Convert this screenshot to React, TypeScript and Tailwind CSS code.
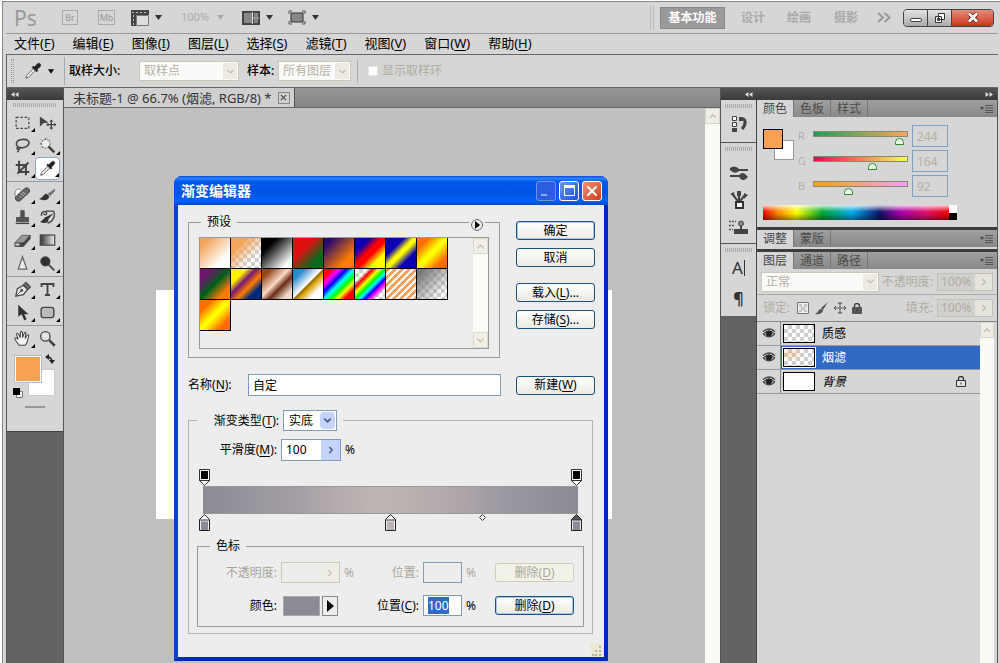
import { useEffect, useRef } from 'react'
import type { ReactNode } from 'react'
import { clsx } from 'clsx'
import { ChevronDown, ChevronRight, ChevronUp, X } from 'lucide-react'

const MENUS = [
    ['文件', 'F'],
    ['编辑', 'E'],
    ['图像', 'I'],
    ['图层', 'L'],
    ['选择', 'S'],
    ['滤镜', 'T'],
    ['视图', 'V'],
    ['窗口', 'W'],
    ['帮助', 'H']
]

const CHECKER = 'bg-[repeating-conic-gradient(#cfcfcf_0_25%,#fff_0_50%)] bg-[length:8px_8px]'

const PRESETS = [
    { name: '前景到背景', fill: 'bg-[linear-gradient(135deg,#f4a45c_15%,#fff_75%)]' },
    { name: '前景到透明', fill: 'bg-[linear-gradient(135deg,#f4a45c_25%,transparent_70%)]' },
    { name: '黑白', fill: 'bg-[linear-gradient(135deg,#000_25%,#fff_85%)]' },
    { name: '红绿', fill: 'bg-[linear-gradient(135deg,#e01010_35%,#0a6a1c_75%)]' },
    { name: '紫橙', fill: 'bg-[linear-gradient(135deg,#2b0a6e_15%,#ff7c00_75%)]' },
    { name: '蓝红黄', fill: 'bg-[linear-gradient(135deg,#0a00b2_25%,#f00_45%,#f00_55%,#fffc00_75%)]' },
    { name: '蓝黄蓝', fill: 'bg-[linear-gradient(135deg,#0a00b2_30%,#fffc00_47%,#fffc00_53%,#0a00b2_72%)]' },
    { name: '橙黄橙', fill: 'bg-[linear-gradient(135deg,#ff6e02_20%,#ffff00_47%,#ffff00_53%,#ff6d00_80%)]' },
    { name: '紫绿橙', fill: 'bg-[linear-gradient(135deg,#6f156c_20%,#00601b_50%,#fd7c00_80%)]' },
    { name: '黄紫橙蓝', fill: 'bg-[linear-gradient(135deg,#fff000_25%,#77196f_42%,#fd7c00_60%,#00287b_78%)]' },
    { name: '铜色', fill: 'bg-[linear-gradient(135deg,#97461a_15%,#fbd8c5_45%,#6c2e16_62%,#efdbcd_85%)]' },
    { name: '铬黄', fill: 'bg-[linear-gradient(135deg,#2989cc_18%,#fff_48%,#906a00_52%,#d99f00_58%,#fff_78%)]' },
    { name: '色谱', fill: 'bg-[linear-gradient(135deg,#f00_12%,#f0f_26%,#00f_38%,#0ff_50%,#0f0_62%,#ff0_72%,#f00_84%)]' },
    { name: '透明彩虹', fill: 'bg-[linear-gradient(135deg,transparent_22%,#f00_30%,#ff0_40%,#0f0_50%,#0ff_58%,#00f_66%,#f0f_74%,transparent_84%)]' },
    { name: '透明条纹', fill: 'bg-[repeating-linear-gradient(135deg,#f4a45c_0_3px,#fff_3px_5px)]' },
    { name: '中灰密度', fill: 'bg-[linear-gradient(135deg,#777_10%,transparent_85%)]' },
    { name: '橙黄橙 2', fill: 'bg-[linear-gradient(135deg,#ff6e02_20%,#ffff00_47%,#ffff00_53%,#ff6d00_80%)]' }
]

const CHANNELS = [
    { name: 'R', value: 244, track: 'bg-[linear-gradient(90deg,#12a45c,#8aa45c,#ffa45c)]' },
    { name: 'G', value: 164, track: 'bg-[linear-gradient(90deg,#f4005c,#f4805c,#f4ff5c)]' },
    { name: 'B', value: 92, track: 'bg-[linear-gradient(90deg,#f4a410,#f4a480,#f49cff)]' }
]

const LAYERS = [
    { name: '质感', kind: 'clear' },
    { name: '烟滤', kind: 'smoke' },
    { name: '背景', kind: 'white' }
]

// --- toolbox glyphs, all on a 20x20 grid ---

const TOOL_GROUPS: { name: string; icon: ReactNode }[][] = [
    [
        { name: '选框', icon: <rect x="2.500" y="4" width="15" height="13" fill="none" strokeWidth="1.400" strokeDasharray="3 2" /> },
        {
            name: '移动',
            icon: (
                <>
                    <path d="M1 3v12l4-4 6-1z" fill="#444" stroke="none" />
                    <path d="M14.500 7.500v10M9.500 12.500h10M13 9l1.500-1.500L16 9M13 16l1.500 1.500L16 16M11 11l-1.500 1.500L11 14M18 11l1.500 1.500L18 14" fill="none" strokeWidth="1.500" />
                </>
            )
        },
        {
            name: '套索',
            icon: (
                <path d="M6 12C1 10 2 4 9 3s10 2 8 6-8 4-11 3c-2-1-3 1-2 2s4 0 3-2M5 14c1 2 0 3-1 4" fill="none" strokeWidth="1.800" />
            )
        },
        {
            name: '快速选择',
            icon: (
                <>
                    <circle cx="8" cy="8" r="5" fill="#eee" strokeDasharray="2 1.500" />
                    <path d="M8 1v2M1 8h2M3 3l1 1M13 3l-1 1M3 13l1-1" />
                    <path d="M11 11l7 7" strokeWidth="3" />
                </>
            )
        },
        {
            name: '裁剪',
            icon: <path d="M6 1v13h12M2 6h12v12M4 16L17 3" fill="none" strokeWidth="2.400" />
        },
        { name: '吸管', icon: <EyedropperPaths /> }
    ],
    [
        {
            name: '修复画笔',
            icon: (
                <>
                    <path d="M3 14C-1 8 2 2 8 4" fill="#fff" stroke="#777" />
                    <rect x="0" y="6.500" width="20" height="7" rx="3.500" transform="rotate(-42 10 10)" fill="#666" />
                    <path d="M8 9l4 3M10 7l4 3M7 12l2 2" stroke="#ccc" />
                </>
            )
        },
        {
            name: '画笔',
            icon: (
                <>
                    <path d="M19 3l-9 6 3 3 6-6z" fill="#777" stroke="none" />
                    <path d="M9 9c-4 0-3 4-9 6 5 3 12 2 12-3z" fill="#333" stroke="none" />
                </>
            )
        },
        {
            name: '仿制图章',
            icon: (
                <>
                    <path d="M8 2h4v8h5v5H3v-5h5z" fill="#555" />
                    <path d="M2 17h16" strokeWidth="1.500" />
                </>
            )
        },
        {
            name: '历史记录画笔',
            icon: (
                <>
                    <path d="M3 8C2 2 9 2 9 5s-4 2-3 0M8 2.500h9c3 5-1 13-7 14" fill="none" strokeWidth="1.600" />
                    <path d="M17 5l-8 4c-3 0-3 4-8 6 5 3 11 1 10-3z" fill="#333" stroke="none" />
                </>
            )
        },
        {
            name: '橡皮擦',
            icon: (
                <>
                    <path d="M1 13l8-9h10l-8 9z" fill="#999" stroke="#555" />
                    <path d="M1 13h10l8-9v4l-8 9H1z" fill="#444" stroke="#444" />
                    <path d="M1.500 13.500h5V16h-5z" fill="#ccc" stroke="none" />
                </>
            )
        },
        {
            name: '渐变',
            icon: (
                <>
                    <defs>
                        <linearGradient id="ramp">
                            <stop offset="0" stopColor="#333" />
                            <stop offset="1" stopColor="#eee" />
                        </linearGradient>
                    </defs>
                    <rect x="1.500" y="3.500" width="17" height="12" fill="url(#ramp)" strokeWidth="1.400" />
                </>
            )
        },
        { name: '锐化', icon: <path d="M10 2L5 16.500h10z" fill="#ececec" stroke="#666" strokeWidth="1.500" /> },
        {
            name: '减淡',
            icon: (
                <>
                    <circle cx="7.500" cy="7.500" r="5.500" fill="#333" />
                    <path d="M11 11l7 7" strokeWidth="2" />
                </>
            )
        }
    ],
    [
        {
            name: '钢笔',
            icon: (
                <>
                    <path d="M2 18l2-9 7-4 5 5-5 6z" fill="#e8e8e8" strokeWidth="1.400" />
                    <path d="M11 4l3-3 6 6-3 3z" fill="#666" />
                    <path d="M2 18l7-7" />
                    <circle cx="9" cy="11" r="1.300" fill="#444" />
                </>
            )
        },
        {
            name: '文字',
            icon: <path d="M3 7V3.500h14V7M10 4v12M7 16.500h6" fill="none" strokeWidth="2.200" />
        },
        { name: '路径选择', icon: <path d="M5 1v14l4-3 3 7 3-1-3-6h5z" fill="#333" stroke="none" /> },
        { name: '圆角矩形', icon: <rect x="2.500" y="4" width="15" height="12" rx="3" fill="#bbb" strokeWidth="1.600" /> }
    ],
    [
        {
            name: '抓手',
            icon: (
                <path
                    d="M6 18c-1-3-5-5-5-8 1-2 3 0 4 1L3 5c1-2 2-1 3 1l1.500 3V3c1-2 2-1 2.500 0v6l2.500-6c1-1 2 0 1.500 1l-1 6 2.500-4c2-1 2 0 1.500 2-1 4-1 6-3.500 10z"
                    fill="#f4f4f4"
                    strokeWidth="1.200"
                />
            )
        },
        {
            name: '缩放',
            icon: (
                <>
                    <circle cx="7.500" cy="7.500" r="5.500" fill="#e4e4e4" strokeWidth="1.500" />
                    <path d="M12 12l6.500 6.500" strokeWidth="3" />
                </>
            )
        }
    ]
]

function EyedropperPaths() {
    return (
        <>
            <path d="M2 18l1-3 8-8 2 2-8 8z" fill="#f4f4f4" />
            <path d="M9 6l5 5 1.500-1.500-1-1L18 5c2-2-1-5-3-3l-3.500 3.500-1-1z" fill="#222" stroke="#222" strokeWidth="0.600" />
        </>
    )
}

function Caret({ className }: { className?: string }) {
    return (
        <svg width="7" height="5" viewBox="0 0 7 5" className={clsx('shrink-0', className)} fill="currentColor">
            <path d="M0 0h7L3.500 5z" />
        </svg>
    )
}

function Hot({ text, hotkey, after }: { text: string; hotkey: string; after?: string }) {
    return (
        <>
            {text}({<u className="underline-offset-2">{hotkey}</u>}){after}
        </>
    )
}

function AppBar() {
    return (
        <header className="flex h-8 items-center border-b border-[#999] pl-2 pr-1 text-[#777]">
            <span className="w-12 text-[21px] leading-5 text-[#999]">Ps</span>
            <button className="h-[15px] w-4 border border-[#aaa] text-[9px] leading-3 text-[#999]">Br</button>
            <button className="ml-5 mr-4 h-[15px] w-[17px] border border-[#aaa] text-[9px] leading-3 text-[#999]">Mb</button>
            <button aria-label="查看额外内容" className="flex w-[50px] items-center gap-1.5 text-[#333]">
                <svg width="18" height="16" viewBox="0 0 18 16">
                    <path d="M0 0h18v5H0zM0 5h5v11H0z" fill="#444" />
                    <path d="M5.500 5.500h12v10h-12z" fill="#ddd" stroke="#777" />
                    <path d="M1 2.500h16" stroke="#bbb" strokeDasharray="2 2" />
                    <path d="M2.500 5v10" stroke="#bbb" strokeDasharray="2 2" />
                </svg>
                <Caret />
            </button>
            <button className="flex w-[61px] items-center gap-2 text-[11px] text-[#aaa]">
                100%
                <Caret />
            </button>
            <button aria-label="排列文档" className="flex w-[46px] items-center gap-1.5 text-[#333]">
                <svg width="18" height="14" viewBox="0 0 18 14">
                    <path d="M0 0h18v14H0z" fill="#444" />
                    <path d="M2 2h8v10H2zM12 2h4v4h-4zM12 8h4v4h-4z" fill="#888" />
                    <path d="M10.500 1v12M11 7h6" stroke="#ddd" />
                </svg>
                <Caret />
            </button>
            <button aria-label="屏幕模式" className="flex items-center gap-1.5 text-[#333]">
                <svg width="18" height="15" viewBox="0 0 18 15">
                    <path d="M1 4V1h3M14 1h3v3M17 11v3h-3M4 14H1v-3" fill="none" stroke="#555" />
                    <rect x="3" y="3" width="12" height="9" fill="#888" stroke="#333" />
                </svg>
                <Caret />
            </button>

            <div className="ml-auto flex items-center text-xs font-bold text-[#aaa]">
                <div className="mr-1.5 h-6 w-1 border-x border-[#bbb]" />
                <button className="mr-4 h-[22px] w-[65px] border border-[#888] bg-[#9a9a9a] text-white">基本功能</button>
                <button className="w-[46px] text-left">设计</button>
                <button className="w-[47px] text-left">绘画</button>
                <button className="w-[43px] text-left">摄影</button>
                <button aria-label="更多工作区" className="mr-3">
                    <svg width="14" height="11" viewBox="0 0 14 11" fill="none" stroke="#999" strokeWidth="2">
                        <path d="M1 1l5 4.500L1 10M7.500 1l5 4.500-5 4.500" />
                    </svg>
                </button>
                <div className="flex h-[18px] overflow-hidden rounded-sm border border-[#444]">
                    <button aria-label="最小化" className="flex w-6 items-center justify-center border-r border-[#444] bg-gradient-to-b from-[#e4e4e4] to-[#aaa]">
                        <span className="mt-1 h-1 w-3 rounded-sm border border-[#444] bg-white" />
                    </button>
                    <button aria-label="还原" className="flex w-6 items-center justify-center border-r border-[#444] bg-gradient-to-b from-[#e4e4e4] to-[#aaa]">
                        <svg width="12" height="12" viewBox="0 0 12 12" fill="#fff" stroke="#333">
                            <path d="M4.500 1.500h6v6h-6zM1.500 4.500h6v6h-6zM3.500 6.500h2v2h-2z" />
                        </svg>
                    </button>
                    <button aria-label="关闭" className="flex w-[41px] items-center justify-center bg-gradient-to-b from-[#e58a78] to-[#c8321a]">
                        <svg width="12" height="11" viewBox="0 0 12 11">
                            <path d="M2 1.500l8 8M10 1.500l-8 8" stroke="#5a2018" strokeWidth="4.500" />
                            <path d="M2 1.500l8 8M10 1.500l-8 8" stroke="#fff" strokeWidth="2.800" />
                        </svg>
                    </button>
                </div>
            </div>
        </header>
    )
}

function MenuBar() {
    return (
        <nav className="flex h-[21px] items-center gap-[18px] border-b border-[#666] pb-0.5 pl-2 text-[13px] leading-[18px]">
            {MENUS.map(([text, hotkey]) => (
                <button key={hotkey} className="shrink-0 whitespace-nowrap">
                    <Hot text={text} hotkey={hotkey} />
                </button>
            ))}
        </nav>
    )
}

function DisabledSelect({ id, value, className }: { id: string; value: string; className: string }) {
    return (
        <div className={clsx('relative shrink-0', className)}>
            <select
                id={id}
                disabled
                aria-label={value}
                className="h-full w-full appearance-none border border-[#ccc8b8] bg-[#fafaf8] pl-1 text-xs leading-4 text-[#b5b1a4] opacity-100"
            >
                <option>{value}</option>
            </select>
            <span className="pointer-events-none absolute right-0.5 top-0.5 flex h-4 w-3.5 items-center justify-center bg-[#eceae2]">
                <ChevronDown size={11} className="text-[#c0bdb0]" strokeWidth={3} />
            </span>
        </div>
    )
}

function OptionsBar() {
    return (
        <div className="flex h-[33px] items-center border-b border-l border-[#666] text-xs">
            <div className="ml-1 h-6 w-[3px] border-x border-dotted border-[#999]" />
            <button aria-label="吸管工具" className="ml-2.5 flex items-center gap-1.5">
                <svg width="18" height="18" viewBox="0 0 20 20" stroke="#555">
                    <EyedropperPaths />
                </svg>
                <Caret className="w-[6px]" />
            </button>
            <div className="ml-2.5 mr-1 h-7 w-px bg-[#aaa]" />
            <label htmlFor="sample-size" className="w-[70px] font-medium">取样大小:</label>
            <DisabledSelect id="sample-size" value="取样点" className="h-5 w-[100px]" />
            <label htmlFor="sample" className="ml-2 w-[31px] whitespace-nowrap font-medium">样本:</label>
            <DisabledSelect id="sample" value="所有图层" className="h-5 w-[73px]" />
            <div className="ml-1.5 mr-2.5 h-6 w-px bg-[#aaa]" />
            <label className="flex items-center gap-1 text-[#b0aca0]">
                <input type="checkbox" disabled className="h-2.5 w-2.5 appearance-none border border-[#e4e4dc] bg-white" />
                显示取样环
            </label>
        </div>
    )
}

function Grip() {
    return <div className="mx-auto h-1 w-[80%] bg-[repeating-linear-gradient(90deg,#aaa_0_1px,transparent_1px_2px)]" />
}

function Toolbox() {
    return (
        <aside className="flex w-[58px] shrink-0 flex-col border-x border-[#555] bg-[#636363]">
            <div className="h-3 bg-gradient-to-b from-[#555] to-[#3a3a3a] pl-1 pt-1">
                <DoubleArrow />
            </div>
            <div className="h-[332px] border-b border-[#444] bg-[#d6d6d6] pt-[3px]">
                <Grip />
                <div className="pt-1">
                    {TOOL_GROUPS.map((group, i) => (
                        <div
                            key={i}
                            className={clsx('grid grid-cols-2 px-[3px]', i > 0 && 'mt-px border-t border-[#999] pt-px')}
                        >
                            {group.map(tool => (
                                <button
                                    key={tool.name}
                                    aria-label={tool.name}
                                    className={clsx(
                                        'relative flex h-[23px] items-center justify-center rounded-sm',
                                        tool.name === '吸管' && 'border border-[#8ea5bd] bg-white'
                                    )}
                                >
                                    <svg width="17" height="17" viewBox="0 0 20 20" stroke="#444">
                                        {tool.icon}
                                    </svg>
                                    {tool.name !== '移动' && tool.name !== '缩放' && (
                                        <svg width="4" height="4" viewBox="0 0 4 4" className="absolute bottom-0.5 right-0">
                                            <path d="M4 0v4H0z" />
                                        </svg>
                                    )}
                                </button>
                            ))}
                        </div>
                    ))}
                </div>
                <div className="relative ml-2 mt-1.5 h-10 w-10">
                    <span className="absolute bottom-0 right-0 h-[27px] w-[27px] border border-[#ccc] bg-white" />
                    <span className="absolute left-0 top-0 h-[26px] w-[26px] border border-white bg-[#f8a053] outline outline-[#bbb]" />
                    <svg width="10" height="10" viewBox="0 0 10 10" className="absolute -top-0.5 right-0">
                        <path d="M2 3q5 0 5 5" fill="none" stroke="#222" strokeWidth="1.500" />
                        <path d="M0 3l4-3v6zM7 10L4 6h6z" fill="#222" />
                    </svg>
                </div>
                <svg width="10" height="10" viewBox="0 0 10 10" className="-mt-2 ml-1.5">
                    <path d="M3.500 3.500h6v6h-6z" fill="#fff" stroke="#777" />
                    <path d="M0 0h7v7H0z" />
                </svg>
                <div className="mx-auto mt-2 h-0.5 w-5 bg-[#999]" />
            </div>
        </aside>
    )
}

function DoubleArrow({ right }: { right?: boolean }) {
    return (
        <svg width="8" height="5" viewBox="0 0 8 5" fill="#ddd" className={clsx(right && 'rotate-180')}>
            <path d="M3.500 0v5L0 2.500zM7.500 0v5L4 2.500z" />
        </svg>
    )
}

function XpButton({ children, disabled, primary }: { children: ReactNode; disabled?: boolean; primary?: boolean }) {
    return (
        <button
            disabled={disabled}
            className={clsx(
                'h-[19px] w-[79px] shrink-0 rounded-[3px] border text-xs leading-4',
                disabled
                    ? 'border-[#d0cdbc] bg-[#f3f2e8] text-[#aaa799]'
                    : 'border-[#1c5180] bg-gradient-to-b from-white to-[#ebeae2]',
                primary && 'shadow-[inset_0_0_0_1px_#a9c4f0]'
            )}
        >
            {children}
        </button>
    )
}

function OpacityStop() {
    return (
        <svg width="11" height="17" viewBox="0 0 11 17">
            <path d="M.5.5h10v11L5.500 16.500.5 11.500z" fill="#fff" stroke="#333" />
            <path d="M2 2h7v8H2z" />
            <path d="M0 11.500h11" stroke="#333" />
        </svg>
    )
}

function ColorStop({ fill, active }: { fill: string; active?: boolean }) {
    return (
        <svg width="11" height="17" viewBox="0 0 11 17">
            <path d="M.5 5.500l5-5 5 5v11H.5z" fill={active ? '#555' : '#fff'} stroke="#222" />
            <path d="M1 6h9v10H1z" fill="#eee" />
            <path d="M2 7.500h7V16H2z" fill={fill} />
            <path d="M0 6h11" stroke="#333" />
        </svg>
    )
}

function PresetPanel() {
    return (
        <fieldset className="relative min-w-0 flex-1 border border-[#9a9a9a] px-[10px] pb-2">
            <legend className="ml-0.5 px-1.5 leading-[14px]">预设</legend>
            <button
                aria-label="预设菜单"
                className="absolute -top-[10px] right-4 flex h-3 w-3 items-center justify-center rounded-full border border-[#555] bg-[#ededed] outline-2 outline-[#ededed]"
            >
                <svg width="5" height="8" viewBox="0 0 5 8">
                    <path d="M0 0v8l5-4z" />
                </svg>
            </button>
            <div className="mt-2 flex h-28 justify-between border border-[#999]">
                <div className="grid auto-rows-[31px] grid-cols-[repeat(8,31px)]">
                    {PRESETS.map(preset => (
                        <button
                            key={preset.name}
                            aria-label={preset.name}
                            className={clsx('border-b border-r border-black', CHECKER)}
                        >
                            <span className={clsx('block h-full w-full', preset.fill)} />
                        </button>
                    ))}
                </div>
                <div className="flex w-[15px] flex-col justify-between bg-[#fcfcf6]">
                    <span className="flex h-4 items-center justify-center border border-[#dddbcc] bg-[#f1f0e6]">
                        <ChevronUp size={11} strokeWidth={3} className="text-[#c0bdaf]" />
                    </span>
                    <span className="flex h-4 items-center justify-center border border-[#dddbcc] bg-[#f1f0e6]">
                        <ChevronDown size={11} strokeWidth={3} className="text-[#c0bdaf]" />
                    </span>
                </div>
            </div>
        </fieldset>
    )
}

function StopRows() {
    const locationRef = useRef<HTMLInputElement>(null)

    useEffect(() => {
        locationRef.current?.select()
    }, [])

    return (
        <fieldset className="mx-2 mt-2 border border-[#999] pb-[10px] pr-[9px]">
            <legend className="ml-3 px-1.5 leading-[14px]">色标</legend>
            <div className="mt-[9px] flex h-[21px] items-center gap-1 text-[#aaa799]">
                <label htmlFor="opacity" className="w-[79px] text-right">不透明度:</label>
                <div className="flex h-[21px] w-[59px] border border-[#ccc9b9]">
                    <input id="opacity" disabled className="w-0 flex-1 bg-[#ededed]" />
                    <span className="flex w-[18px] items-center justify-center bg-[#efeee6]">
                        <ChevronRight size={10} strokeWidth={3} className="text-[#c0bdaf]" />
                    </span>
                </div>
                <span className="w-[14px]">%</span>
                <label htmlFor="opacity-loc" className="w-[57px] text-right">位置:</label>
                <input id="opacity-loc" disabled className="h-[21px] w-[39px] border border-[#7f9db9]" />
                <span className="w-[14px]">%</span>
                <div className="ml-auto flex">
                    <XpButton disabled>
                        <Hot text="删除" hotkey="D" />
                    </XpButton>
                </div>
            </div>
            <div className="mt-3 flex h-[21px] items-center gap-1">
                <span className="w-[79px] text-right">颜色:</span>
                <div className="flex w-[59px] gap-0.5 pl-0.5">
                    <button aria-label="颜色" className="h-5 w-[37px] border border-[#aaa] bg-[#8c8b95]" />
                    <button aria-label="颜色菜单" className="flex h-5 w-4 items-center justify-center border border-[#888]">
                        <svg width="7" height="12" viewBox="0 0 7 12">
                            <path d="M0 0v12l7-6z" />
                        </svg>
                    </button>
                </div>
                <span className="w-[14px]" />
                <label htmlFor="color-loc" className="w-[57px] whitespace-nowrap text-right">
                    <Hot text="位置" hotkey="C" after=":" />
                </label>
                <input
                    id="color-loc"
                    ref={locationRef}
                    defaultValue="100"
                    className="h-[21px] w-[39px] border border-[#7f9db9] bg-white pl-1 outline-none selection:bg-[#316ac5] selection:text-white"
                />
                <span className="w-[14px]">%</span>
                <div className="ml-auto flex">
                    <XpButton primary>
                        <Hot text="删除" hotkey="D" />
                    </XpButton>
                </div>
            </div>
        </fieldset>
    )
}

function GradientDialog() {
    return (
        <section
            aria-label="渐变编辑器"
            className="absolute left-[110px] top-[68px] w-[434px] rounded-t-lg border-x-4 border-b-4 border-b-[#0028c4] border-l-[#0a3fd8] border-r-[#0028c4] bg-[#ededed] text-xs leading-4"
        >
            <div className="-mx-1 flex h-[29px] items-center gap-[3px] rounded-t-lg bg-[linear-gradient(180deg,#0a48d0_0%,#2f84ff_8%,#0058ee_20%,#0054e3_60%,#0062fa_85%,#0048cc_100%)] pl-[7px] pr-1.5">
                <h2 className="flex-1 text-sm font-bold text-white">渐变编辑器</h2>
                <button aria-label="最小化" disabled className="flex h-5 w-5 items-end rounded-[3px] border border-[#6f93ee] bg-[#2c5ce0] p-1">
                    <span className="h-0.5 w-1.5 bg-[#8fabf0]" />
                </button>
                <button aria-label="最大化" className="flex h-5 w-5 items-center justify-center rounded-[3px] border border-white bg-gradient-to-br from-[#6b96f5] to-[#1a50dc]">
                    <span className="h-[11px] w-[11px] border border-t-[3px] border-white" />
                </button>
                <button aria-label="关闭" className="flex h-5 w-5 items-center justify-center rounded-[3px] border border-white bg-gradient-to-br from-[#f09070] to-[#d03a14]">
                    <X size={16} strokeWidth={3} className="text-white" />
                </button>
            </div>

            <div className="pl-[10px] pr-[9px] pt-[10px]">
                <div className="flex gap-4">
                    <PresetPanel />
                    <div className="flex flex-col gap-2 pt-[6px]">
                        <XpButton primary>确定</XpButton>
                        <XpButton>取消</XpButton>
                        <div className="mt-2 flex flex-col gap-2">
                            <XpButton>
                                <Hot text="载入" hotkey="L" after="..." />
                            </XpButton>
                            <XpButton>
                                <Hot text="存储" hotkey="S" after="..." />
                            </XpButton>
                        </div>
                    </div>
                </div>

                <div className="mt-4 flex items-center">
                    <label htmlFor="gradient-name" className="w-[60px]">
                        <Hot text="名称" hotkey="N" after=":" />
                    </label>
                    <input id="gradient-name" defaultValue="自定" className="mr-[15px] h-[22px] min-w-0 flex-1 border border-[#7f9db9] bg-white pl-1" />
                    <XpButton>
                        <Hot text="新建" hotkey="W" />
                    </XpButton>
                </div>

                <fieldset className="mr-0.5 mt-[14px] border border-[#b5b5b0] pb-[6px]">
                    <legend className="ml-2 pr-1.5">
                        <div className="flex h-[21px] items-center gap-1">
                            <label htmlFor="gradient-type" className="w-[82px] text-right">
                                <Hot text="渐变类型" hotkey="T" after=":" />
                            </label>
                            <div className="relative h-[21px] w-[54px]">
                                <select id="gradient-type" className="h-full w-full appearance-none border border-[#7f9db9] bg-white pl-[5px]">
                                    <option>实底</option>
                                </select>
                                <span className="pointer-events-none absolute right-0.5 top-0.5 flex h-[17px] w-[15px] items-center justify-center rounded-sm bg-[#c4d4fa]">
                                    <ChevronDown size={11} strokeWidth={4} className="text-[#4d6185]" />
                                </span>
                            </div>
                        </div>
                    </legend>
                    <div className="mt-2 flex h-[22px] items-center gap-1 pl-2">
                        <label htmlFor="smoothness" className="w-[80px] text-right">
                            <Hot text="平滑度" hotkey="M" after=":" />
                        </label>
                        <div className="flex h-[22px] w-[60px] border border-[#7f9db9] bg-white">
                            <input id="smoothness" defaultValue="100" className="w-0 flex-1 pl-1" />
                            <button aria-label="调整平滑度" className="flex w-[19px] items-center justify-center bg-[#c4d4fa]">
                                <ChevronRight size={10} strokeWidth={4} className="text-[#4d6185]" />
                            </button>
                        </div>
                        <span>%</span>
                    </div>

                    <div className="mt-2 flex justify-between px-[10px]">
                        <OpacityStop />
                        <OpacityStop />
                    </div>
                    <div className="mx-[14px] h-7 border-y border-[#999] bg-[linear-gradient(90deg,#8b8b95,#a59fa6_25%,#beb4b3_45%,#beb4b3_50%,#b0a7aa_68%,#9b98a2_80%,#8b8b95)]" />
                    <div className="relative flex justify-between px-[10px]">
                        <ColorStop fill="#8b8b95" />
                        <ColorStop fill="#bcb4b4" />
                        <ColorStop fill="#8b8b95" active />
                        <svg width="7" height="7" viewBox="0 0 7 7" className="absolute left-[72%] top-0">
                            <path d="M3.500.5l3 3-3 3-3-3z" fill="#fff" stroke="#333" />
                        </svg>
                    </div>
                    <StopRows />
                </fieldset>
            </div>
            <div className="flex h-[23px] items-end justify-end">
                <svg width="14" height="14" viewBox="0 0 14 14">
                    <path d="M0 0h14v14H0z" fill="#ebe8d5" />
                    <path d="M9 3h2v2H9zM5 7h2v2H5zM9 7h2v2H9zM2 11h2v2H2zM5 11h2v2H5zM9 11h2v2H9z" fill="#b8b4a0" />
                </svg>
            </div>
        </section>
    )
}

function DocumentArea() {
    return (
        <main className="flex min-w-0 flex-1 flex-col">
            <div className="flex h-5 border-b border-[#666] bg-gradient-to-b from-[#979797] to-[#858585]">
                <button className="flex items-center gap-1.5 border-r border-[#555] bg-[#d0d0d0] pl-[9px] pr-1 text-[13px] leading-4 text-[#333]">
                    <span className="whitespace-nowrap">未标题-1 @ 66.7% (烟滤, RGB/8) *</span>
                    <span className="flex h-3 w-3 items-center justify-center border border-[#888]">
                        <X size={9} strokeWidth={3} className="text-[#555]" />
                    </span>
                </button>
            </div>
            <div className="relative flex flex-1 justify-end overflow-hidden bg-[#c0c0c0]">
                <div className="absolute left-[92px] top-[182px] h-[229px] w-[456px] bg-white" />
                <div className="w-[15px] bg-[#fbfbf6]">
                    <div className="flex h-4 items-center justify-center border border-[#d8d6ca] bg-[#efeee6]">
                        <ChevronUp size={10} strokeWidth={3} className="text-[#c0bdaf]" />
                    </div>
                </div>
                <GradientDialog />
            </div>
        </main>
    )
}

function IconStrip() {
    return (
        <div className="flex w-[35px] flex-col bg-[#636363]">
            <div className="h-[43px] shrink-0 border-b border-[#555] bg-[#d6d6d6] pt-1 text-center">
                <Grip />
                <button aria-label="历史记录" className="mt-1.5">
                    <svg width="18" height="20" viewBox="0 0 18 20">
                        <path d="M2.500 2.500h4v4h-4zM2.500 8.500h4v4h-4z" fill="#fff" stroke="#444" />
                        <path d="M2 14h5v4H2zM9 3h4v4H9z" fill="#444" />
                        <path d="M10 5c7-2 6 6 2 10" fill="none" stroke="#444" strokeWidth="3" />
                    </svg>
                </button>
            </div>
            <div className="flex h-[101px] shrink-0 flex-col items-center gap-2.5 border-b border-[#555] bg-[#d6d6d6] pt-1">
                <Grip />
                <button aria-label="画笔" className="mt-1">
                    <svg width="20" height="16" viewBox="0 0 20 16">
                        <path d="M1 3q4-3 8 0l1 1h9v2h-9q-4 4-9-1zM1 10h9q4-4 7 0l2 2-2 2q-4 3-7-2H1z" fill="#444" />
                    </svg>
                </button>
                <button aria-label="画笔预设">
                    <svg width="18" height="19" viewBox="0 0 18 19">
                        <path d="M8 10L3 4M9 10V2M10 10l5-6" stroke="#444" strokeWidth="2" />
                        <path d="M0 3l4-2 1 5zM7 0h4v5H7zM14 2l4 2-4 4z" fill="#444" />
                        <path d="M6 11h7v6H6z" fill="#fff" stroke="#333" strokeWidth="2" />
                    </svg>
                </button>
                <button aria-label="仿制源">
                    <svg width="20" height="16" viewBox="0 0 20 16">
                        <path d="M0 1.500h7M0 5.500h6M0 9.500h4" stroke="#555" strokeWidth="1.500" strokeDasharray="2 1" />
                        <circle cx="12" cy="3.500" r="2.500" fill="#888" stroke="#444" />
                        <path d="M11 6h2v3h6v5H5V9h6z" fill="#444" />
                    </svg>
                </button>
            </div>
            <div className="flex h-[72px] shrink-0 flex-col items-center bg-[#d6d6d6] pt-1">
                <Grip />
                <button aria-label="字符" className="mt-1 flex items-center gap-px text-[17px] leading-6 text-[#333]">
                    A<span className="h-4 w-px bg-[#333]" />
                </button>
                <button aria-label="段落" className="mt-1 text-base font-bold leading-7 text-[#333]">¶</button>
            </div>
        </div>
    )
}

function PanelTabs({ tabs }: { tabs: string[] }) {
    return (
        <div role="tablist" className="flex h-[17px] shrink-0 items-stretch bg-gradient-to-b from-[#a0a0a0] to-[#888]">
            {tabs.map((tab, i) => (
                <button
                    key={tab}
                    role="tab"
                    aria-selected={i === 0}
                    className={clsx(
                        'w-[37px] border-r border-[#777] text-xs leading-4',
                        i === 0 ? 'bg-[#d6d6d6] text-[#444]' : 'text-[#4a4a4a]'
                    )}
                >
                    {tab}
                </button>
            ))}
            <button aria-label="面板菜单" className="ml-auto mr-1">
                <svg width="13" height="8" viewBox="0 0 13 8">
                    <path d="M0 2h4L2 5z" fill="#444" />
                    <path d="M5 .5h8M5 3h8M5 5.500h8M5 7.500h8" stroke="#555" />
                </svg>
            </button>
        </div>
    )
}

function ColorPanel() {
    return (
        <div className="border-b-[3px] border-[#3c3c3c]">
            <PanelTabs tabs={['颜色', '色板', '样式']} />
            <div className="flex pl-1.5 pt-2">
                <div className="relative mt-1 h-[31px] w-[31px] shrink-0">
                    <span className="absolute bottom-0 right-0 h-5 w-5 border border-[#999] bg-white" />
                    <span className="absolute left-0 top-0 h-5 w-5 border border-black bg-[#f8a053]" />
                </div>
                <div className="ml-1 flex flex-col gap-[3px]">
                    {CHANNELS.map(channel => (
                        <div key={channel.name} className="flex h-[22px] items-center">
                            <label htmlFor={channel.name} className="w-[15px] text-[11px] text-[#b5b0aa]">
                                {channel.name}
                            </label>
                            <div className="flex w-[95px] flex-col pt-1">
                                <div className={clsx('h-1.5 border border-[#8a8a6a]', channel.track)} />
                                <input
                                    id={channel.name}
                                    type="range"
                                    min={0}
                                    max={255}
                                    defaultValue={channel.value}
                                    className="h-2 w-full appearance-none bg-transparent [&::-webkit-slider-thumb]:h-[7px] [&::-webkit-slider-thumb]:w-[9px] [&::-webkit-slider-thumb]:appearance-none [&::-webkit-slider-thumb]:rounded-t-full [&::-webkit-slider-thumb]:border [&::-webkit-slider-thumb]:border-[#2c8a2c] [&::-webkit-slider-thumb]:bg-[#f4fff0]"
                                />
                            </div>
                            <input
                                aria-label={`${channel.name} 值`}
                                defaultValue={channel.value}
                                className="ml-1 h-[22px] w-[36px] border border-[#7fa3c4] pl-1 text-xs text-[#b5b0a4]"
                            />
                        </div>
                    ))}
                </div>
            </div>
            <div className="mb-[7px] ml-1.5 mt-2 flex h-[15px]">
                <div className="w-[186px] bg-[linear-gradient(180deg,#ffffffd0,transparent_45%,transparent_55%,#00000070),linear-gradient(90deg,#e00_0%,#f80_8%,#ff0_18%,#0a3_32%,#0ae_48%,#116_63%,#a0a_74%,#e0106a_88%,#e00)]" />
                <div className="w-2 border-b-[7px] border-black bg-white" />
            </div>
        </div>
    )
}

function Percent({ id, label }: { id: string; label: string }) {
    return (
        <div className="ml-auto flex items-center gap-1">
            <label htmlFor={id} className="whitespace-nowrap">{label}</label>
            <div className="flex h-[18px] w-[56px] border border-[#c4c1b4]">
                <input id={id} disabled defaultValue="100%" className="w-0 flex-1 bg-[#d0d0ce] pl-[3px] text-xs" />
                <span className="flex w-[17px] items-center justify-center bg-[#e4e3dc]">
                    <ChevronRight size={10} strokeWidth={3} className="text-[#bbb8aa]" />
                </span>
            </div>
        </div>
    )
}

function EyeIcon() {
    return (
        <svg width="14" height="11" viewBox="0 0 14 11">
            <path d="M1 6q6-6 12 0-6 6-12 0z" fill="#999" stroke="#333" />
            <path d="M1 3.500q6-5 12 0" fill="none" stroke="#444" strokeWidth="1.500" />
            <circle cx="7" cy="5.500" r="3" fill="#222" />
        </svg>
    )
}

function PadLock({ solid }: { solid?: boolean }) {
    return (
        <svg width="10" height="11" viewBox="0 0 10 11">
            <path d="M2.500 5V3q0-2.500 2.500-2.500T7.500 3v2" fill="none" stroke="#333" strokeWidth="1.300" />
            <path d="M.5 4.500h9v6h-9z" fill={solid ? '#555' : '#e4e4e4'} stroke={solid ? '#555' : '#333'} />
            <path d="M5 6.500v2" stroke="#333" />
        </svg>
    )
}

function LayersPanel() {
    return (
        <div className="flex flex-1 flex-col">
            <PanelTabs tabs={['图层', '通道', '路径']} />
            <div className="flex h-[26px] items-center border-b border-[#aaa] pl-1 pr-1 text-xs text-[#b0aca0]">
                <DisabledSelect id="blend" value="正常" className="h-5 w-[118px]" />
                <Percent id="layer-opacity" label="不透明度:" />
            </div>
            <div className="flex h-[27px] items-center border-b border-[#888] pl-1.5 pr-1 text-xs text-[#b0aca0]">
                <span className="w-[34px] whitespace-nowrap">锁定:</span>
                <div className="flex items-center gap-1.5">
                    <button aria-label="锁定透明像素">
                        <svg width="12" height="12" viewBox="0 0 12 12">
                            <path d="M.5.5h11v11H.5z" fill="#eee" stroke="#777" />
                            <path d="M2 2h3v3H2zM7 2h3v3H7zM4 5h4v3H4zM2 8h3v2H2zM7 8h3v2H7z" fill="#c4c4c4" />
                        </svg>
                    </button>
                    <button aria-label="锁定图像像素">
                        <svg width="13" height="13" viewBox="0 0 13 13">
                            <path d="M13 0L6 6l2 2zM6 7c-3 0-2 3-6 5 4 1 8-1 8-4z" fill="#555" />
                        </svg>
                    </button>
                    <button aria-label="锁定位置">
                        <svg width="12" height="12" viewBox="0 0 12 12" fill="none" stroke="#555">
                            <path d="M6 0v12M0 6h12M4 2l2-2 2 2M4 10l2 2 2-2M2 4L0 6l2 2M10 4l2 2-2 2" />
                        </svg>
                    </button>
                    <button aria-label="锁定全部">
                        <PadLock solid />
                    </button>
                </div>
                <Percent id="fill" label="填充:" />
            </div>
            <div className="flex flex-1">
                <ul className="flex-1">
                    {LAYERS.map(layer => (
                        <li
                            key={layer.name}
                            className={clsx(
                                'flex h-6 items-center border-b border-[#999] text-xs',
                                layer.kind === 'smoke' && 'bg-[#316ac5] text-white'
                            )}
                        >
                            <button aria-label="可见性" className="flex h-full w-[24px] items-center justify-center border-r border-[#888] bg-[#d6d6d6]">
                                <EyeIcon />
                            </button>
                            <span
                                className={clsx(
                                    'ml-0.5 mr-[7px] h-[19px] w-8 border border-black',
                                    layer.kind === 'white' ? 'bg-white' : CHECKER,
                                    layer.kind === 'smoke' && 'outline outline-white'
                                )}
                            >
                                {layer.kind === 'smoke' && (
                                    <span className="block h-full w-full bg-[radial-gradient(ellipse_at_25%_30%,#f8a05366,transparent_40%)]" />
                                )}
                            </span>
                            <span className={clsx(layer.kind === 'white' && 'italic')}>{layer.name}</span>
                            {layer.kind === 'white' && (
                                <span className="ml-auto mr-[14px]">
                                    <PadLock />
                                </span>
                            )}
                        </li>
                    ))}
                </ul>
                <div className="mr-[3px] w-[14px] bg-[#fbfbf6]">
                    <div className="flex h-4 items-center justify-center border border-[#d8d6ca] bg-[#efeee6]">
                        <ChevronUp size={10} strokeWidth={3} className="text-[#c0bdaf]" />
                    </div>
                </div>
            </div>
        </div>
    )
}

function RightDock() {
    return (
        <aside className="flex w-[278px] shrink-0 flex-col border-x border-[#555]">
            <div className="flex h-3 bg-gradient-to-b from-[#555] to-[#3a3a3a] pr-1 pt-1">
                <div className="flex w-8 justify-end">
                    <DoubleArrow />
                </div>
                <div className="ml-auto">
                    <DoubleArrow right />
                </div>
            </div>
            <div className="flex flex-1">
                <IconStrip />
                <div className="flex flex-1 flex-col border-l border-[#444] bg-[#d6d6d6]">
                    <ColorPanel />
                    <div className="border-b-[3px] border-[#3c3c3c] pb-0.5">
                        <PanelTabs tabs={['调整', '蒙版']} />
                    </div>
                    <LayersPanel />
                </div>
            </div>
        </aside>
    )
}

export default function App() {
    return (
        <div className="flex min-h-screen flex-col bg-white pl-0.5 pt-px font-['Noto_Sans','Noto_Sans_CJK_SC',sans-serif] text-black">
            <div className="flex flex-1 flex-col border-l border-t border-[#888] bg-[#d6d6d6] pl-[3px] pr-0.5">
                <AppBar />
                <MenuBar />
                <OptionsBar />
                <div className="flex flex-1">
                    <Toolbox />
                    <DocumentArea />
                    <RightDock />
                </div>
            </div>
        </div>
    )
}
